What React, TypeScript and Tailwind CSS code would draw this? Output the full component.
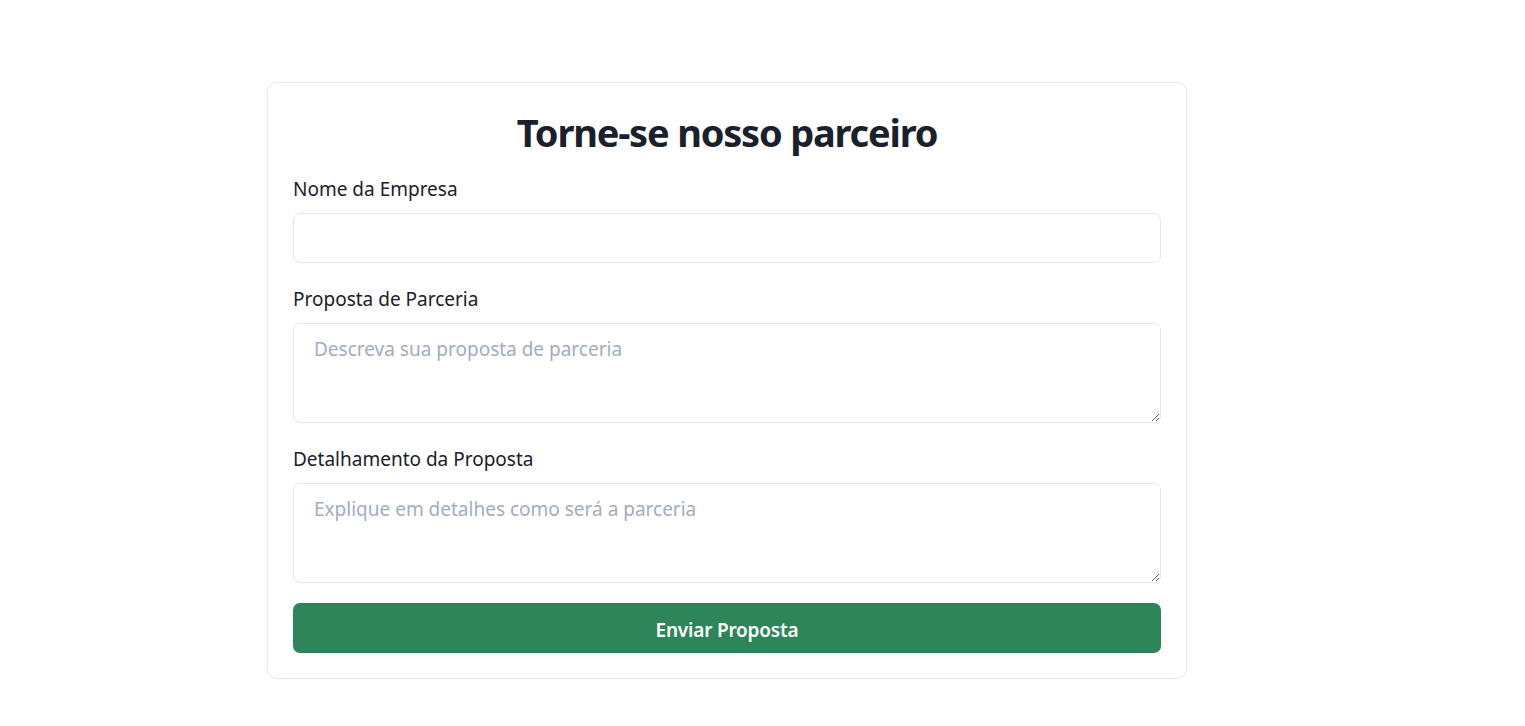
const fields = [
  { label: "Proposta de Parceria", placeholder: "Descreva sua proposta de parceria" },
  { label: "Detalhamento da Proposta", placeholder: "Explique em detalhes como será a parceria" },
];

export default function App() {
  return (
    <div className="min-h-[726px] bg-white pt-[82px] pl-[267px] font-['Noto_Sans',sans-serif] text-[#1a202c]">
      <form
        className="w-[920px] rounded-[10px] border border-[#e2e8f0] p-[25px]"
        onSubmit={(e) => e.preventDefault()}
      >
        <h1 className="mb-[17px] text-center text-[38px] font-bold leading-[48px] tracking-[-1.2px]">
          Torne-se nosso parceiro
        </h1>

        <div className="mb-[20px]">
          <label className="mb-[10px] block pt-[3px] text-[19px] leading-[27px]">Nome da Empresa</label>
          <input
            type="text"
            className="block h-[50px] w-full rounded-[7px] border border-[#e2e8f0] px-[20px] text-[19px] outline-none"
          />
        </div>

        {fields.map((f) => (
          <div key={f.label} className="mb-[20px]">
            <label className="mb-[10px] block pt-[3px] text-[19px] leading-[27px]">{f.label}</label>
            <textarea
              placeholder={f.placeholder}
              className="block h-[100px] w-full rounded-[7px] border border-[#e2e8f0] px-[20px] pt-[12px] pb-[8px] text-[19px] leading-[27px] outline-none placeholder:text-[#a0aec0]"
            />
          </div>
        ))}

        <button
          type="submit"
          className="block h-[50px] w-full rounded-[7px] bg-[#2f855a] pt-[5px] text-[19px] font-semibold tracking-[-0.2px] text-white"
        >
          Enviar Proposta
        </button>
      </form>
    </div>
  );
}
